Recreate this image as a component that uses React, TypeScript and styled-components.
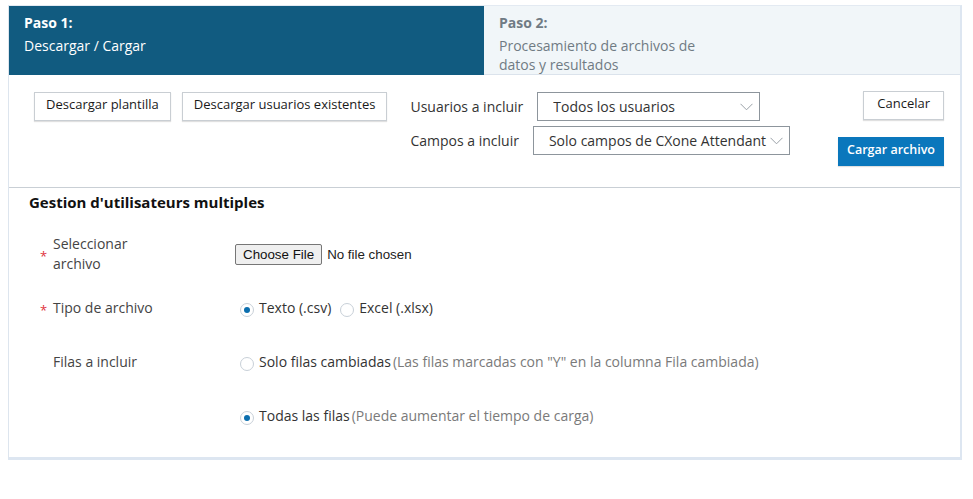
import styled, { createGlobalStyle } from 'styled-components'

const GlobalStyle = createGlobalStyle`
  * { box-sizing: border-box; }
  body {
    margin: 0;
    background: #fff;
    font-family: "Open Sans", "Liberation Sans", Arial, sans-serif;
    color: #333;
  }
`

function Chevron() {
  return (
    <svg width='13' height='8' viewBox='0 0 13 8' fill='none'>
      <path d='M0.5 0.8 L6.5 6.8 L12.5 0.8' stroke='#9aa1a7' strokeWidth='1' />
    </svg>
  )
}

function Radio({ checked, label, hint }: { checked?: boolean; label: string; hint?: string }) {
  return (
    <RadioLabel>
      <RadioCircle $checked={checked} />
      <span>{label}</span>
      {hint && <Hint>{hint}</Hint>}
    </RadioLabel>
  )
}

export default function App() {
  return (
    <>
      <GlobalStyle />
      <Page>
        <Steps>
          <Step $active>
            <StepTitle>Paso 1:</StepTitle>
            <StepText>Descargar / Cargar</StepText>
          </Step>
          <Step>
            <StepTitle>Paso 2:</StepTitle>
            <StepText>Procesamiento de archivos de datos y resultados</StepText>
          </Step>
        </Steps>

        <Toolbar>
          <ButtonGroup>
            <Button>Descargar plantilla</Button>
            <Button>Descargar usuarios existentes</Button>
          </ButtonGroup>

          <Filters>
            <FilterRow>
              <FilterLabel>Usuarios a incluir</FilterLabel>
              <SelectBox $width={223}>
                <SelectText>Todos los usuarios</SelectText>
                <Chevron />
              </SelectBox>
            </FilterRow>
            <FilterRow>
              <FilterLabel>Campos a incluir</FilterLabel>
              <SelectBox $width={257}>
                <SelectText>Solo campos de CXone Attendant</SelectText>
                <Chevron />
              </SelectBox>
            </FilterRow>
          </Filters>

          <Actions>
            <CancelButton>Cancelar</CancelButton>
            <PrimaryButton>Cargar archivo</PrimaryButton>
          </Actions>
        </Toolbar>

        <Section>
          <SectionTitle>Gestion d'utilisateurs multiples</SectionTitle>

          <FormRow>
            <FieldLabel>
              <Required>*</Required>
              <span>Seleccionar<br />archivo</span>
            </FieldLabel>
            <FieldValue>
              <FileInput type='file' />
            </FieldValue>
          </FormRow>

          <FormRow>
            <FieldLabel>
              <Required>*</Required>
              <span>Tipo de archivo</span>
            </FieldLabel>
            <FieldValue>
              <Radio checked label='Texto (.csv)' />
              <Radio label='Excel (.xlsx)' />
            </FieldValue>
          </FormRow>

          <FormRow>
            <FieldLabel>
              <Required />
              <span>Filas a incluir</span>
            </FieldLabel>
            <FieldValue>
              <Radio
                label='Solo filas cambiadas'
                hint='(Las filas marcadas con "Y" en la columna Fila cambiada)'
              />
            </FieldValue>
          </FormRow>

          <FormRow>
            <FieldLabel />
            <FieldValue>
              <Radio checked label='Todas las filas' hint='(Puede aumentar el tiempo de carga)' />
            </FieldValue>
          </FormRow>
        </Section>
      </Page>
    </>
  )
}

const Page = styled.div`
  margin: 5px 0 0 8px;
  width: 954px;
  border-top: 1px solid #e3eaf2;
  border-left: 1px solid #dde5ee;
  border-right: 2px solid #dde6f1;
  border-bottom: 3px solid #dde6f1;
`

const Steps = styled.div`
  display: grid;
  grid-template-columns: 475px 1fr;
  height: 69px;
`

const Step = styled.div<{ $active?: boolean }>`
  padding: 7px 15px 0;
  background: ${p => (p.$active ? '#115b80' : '#f1f6f9')};
  color: ${p => (p.$active ? '#ffffff' : '#707b84')};
  border-bottom: ${p => (p.$active ? 'none' : '1px solid #dbe3ec')};
  font-size: 14px;
  line-height: 19px;
`

const StepTitle = styled.div`
  font-weight: 700;
  margin-bottom: 4px;
`

const StepText = styled.div`
  max-width: 212px;
`

const Toolbar = styled.div`
  display: flex;
  align-items: flex-start;
  height: 113px;
  padding: 17px 16px 0 25px;
  border-bottom: 1px solid #c9cfd5;
`

const ButtonGroup = styled.div`
  display: flex;
  gap: 11px;
`

const Button = styled.button`
  height: 29px;
  padding: 0 11px 5px;
  background: #fff;
  border: 1px solid #c9ced3;
  border-radius: 0;
  box-shadow: 0 1px 1px rgba(0, 0, 0, 0.12);
  font-family: "Open Sans", "Liberation Sans", Arial, sans-serif;
  font-size: 13px;
  font-weight: 400;
  color: #1a1a1a;
  cursor: pointer;
`

const CancelButton = styled(Button)`
  padding: 0 13px 5px;
`

const PrimaryButton = styled(Button)`
  padding: 0 8px 4px;
  background: #0a77bc;
  border-color: #0a77bc;
  color: #fff;
  font-size: 12.5px;
  font-weight: 600;
`

const Filters = styled.div`
  display: flex;
  flex-direction: column;
  gap: 5px;
  margin-left: 23px;
`

const FilterRow = styled.div`
  display: flex;
  align-items: center;
  gap: 14px;
`

const FilterLabel = styled.span`
  font-size: 14px;
  color: #333;
`

const SelectBox = styled.div<{ $width: number }>`
  display: flex;
  align-items: center;
  width: ${p => p.$width}px;
  height: 29px;
  padding: 0 6px 0 15px;
  border: 1px solid #8d959c;
  background: #fff;
  overflow: hidden;

  svg {
    flex: none;
    margin-left: 2px;
  }
`

const SelectText = styled.span`
  flex: 1;
  font-size: 14px;
  color: #333;
  white-space: nowrap;
  overflow: hidden;
`

const Actions = styled.div`
  display: flex;
  flex-direction: column;
  align-items: flex-end;
  gap: 17px;
  margin-left: auto;
  margin-top: -1px;
`

const Section = styled.div`
  padding: 4px 20px 14px 20px;
`

const SectionTitle = styled.h2`
  margin: 0 0 15px;
  font-size: 15px;
  line-height: 20px;
  font-weight: 700;
  color: #111;
`

const FormRow = styled.div`
  display: grid;
  grid-template-columns: 206px 1fr;
  align-items: center;
  min-height: 54px;
`

const FieldLabel = styled.div`
  display: flex;
  align-items: center;
  padding-left: 11px;
  font-size: 14px;
  line-height: 20px;
  color: #444;
`

const Required = styled.span`
  width: 13px;
  flex: none;
  color: #e0323c;
  font-size: 13px;
  margin-top: 4px;
`

const FieldValue = styled.div`
  display: flex;
  align-items: center;
  gap: 4px;
`

const FileInput = styled.input`
  font-family: "Liberation Sans", Arial, sans-serif;
  font-size: 13.33px;
  color: #222;

  &::file-selector-button {
    font-family: "Liberation Sans", Arial, sans-serif;
    font-size: 13.33px;
    height: 21px;
    padding: 0 7px;
    margin-right: 5px;
    background: #efefef;
    border: 1px solid #767676;
    border-radius: 2px;
    color: #111;
  }
`

const RadioLabel = styled.label`
  display: flex;
  align-items: center;
  font-size: 14px;
  color: #333;
  line-height: 20px;
`

const RadioCircle = styled.span<{ $checked?: boolean }>`
  position: relative;
  width: 14px;
  height: 14px;
  margin: 4px 5px 0 5px;
  border: 1px solid #c8d0d8;
  border-radius: 50%;
  background: #fff;
  flex: none;

  &::after {
    content: '';
    display: ${p => (p.$checked ? 'block' : 'none')};
    position: absolute;
    left: 3px;
    top: 3px;
    width: 6px;
    height: 6px;
    border-radius: 50%;
    background: #0b6eae;
  }
`

const Hint = styled.span`
  margin-left: 2px;
  color: #7a7a7a;
`
